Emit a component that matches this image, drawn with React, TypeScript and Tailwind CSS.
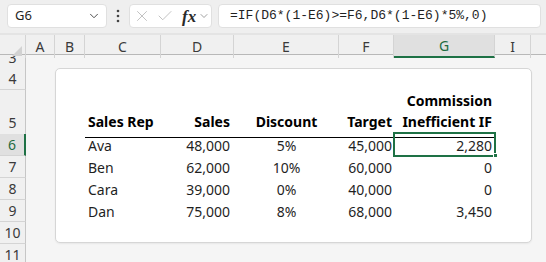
import { Check, ChevronDown, X } from "lucide-react";

const COLS = "grid grid-cols-[26px_29px_30px_76px_73px_105px_55px_101px_36px_1fr]";
const ROWHEAD = "flex items-center justify-center border-b border-r border-[#d4d4d4] border-r-[#c6c6c6] bg-[#f0f0f0] text-[14px] text-[#3a3a3a]";
const HEAD = "flex items-end pb-[5px] border-b border-black font-bold text-black";

interface Rep {
  row: number;
  name: string;
  sales: string;
  discount: string;
  target: string;
  commission: string;
}

const reps: Rep[] = [
  { row: 6, name: "Ava", sales: "48,000", discount: "5%", target: "45,000", commission: "2,280" },
  { row: 7, name: "Ben", sales: "62,000", discount: "10%", target: "60,000", commission: "0" },
  { row: 8, name: "Cara", sales: "39,000", discount: "0%", target: "40,000", commission: "0" },
  { row: 9, name: "Dan", sales: "75,000", discount: "8%", target: "68,000", commission: "3,450" },
];

const letters = ["A", "B", "C", "D", "E", "F", "G", "I"];

export default function App() {
  return (
    <div
      className="h-[262px] w-[546px] overflow-hidden bg-[#f5f5f5] text-[#1f1f1f]"
      style={{ fontFamily: '"Noto Sans", "Open Sans", sans-serif' }}
    >
      {/* Formula bar */}
      <div className="flex h-[33px] items-start bg-[#efefef] pl-[7px] pt-[4px]">
        <div className="flex h-[24px] w-[100px] items-center justify-between rounded-[4px] border border-[#e0e0e0] bg-white pl-[7px] pr-[5px]">
          <span className="text-[13px] text-[#1f1f1f]">G6</span>
          <ChevronDown size={14} strokeWidth={1.6} className="text-[#444]" />
        </div>
        <div className="flex h-[24px] w-[22px] items-center justify-center">
          <svg width="4" height="14" viewBox="0 0 4 14">
            <circle cx="2" cy="2" r="1.3" fill="#444" />
            <circle cx="2" cy="7" r="1.3" fill="#444" />
            <circle cx="2" cy="12" r="1.3" fill="#444" />
          </svg>
        </div>
        <div className="flex h-[24px] w-[83px] items-center rounded-[4px] border border-[#e0e0e0] bg-white pl-[3px]">
          <X size={18} strokeWidth={1.1} className="text-[#b5b5b5]" />
          <Check size={18} strokeWidth={1.1} className="ml-[5px] text-[#b5b5b5]" />
          <span
            className="ml-[8px] text-[17px] font-semibold italic leading-none text-[#2a2a2a]"
            style={{ fontFamily: '"Liberation Serif", serif' }}
          >
            fx
          </span>
          <ChevronDown size={12} strokeWidth={1.4} className="ml-[2px] text-[#777]" />
        </div>
        <div
          className="ml-[6px] mr-[5px] flex h-[24px] flex-1 items-center rounded-[4px] border border-[#e0e0e0] bg-white pl-[11px] text-[13px] text-[#1f1f1f]"
          style={{ fontFamily: '"Liberation Mono", monospace' }}
        >
          =IF(D6*(1-E6)&gt;=F6,D6*(1-E6)*5%,0)
        </div>
      </div>

      {/* Column headers */}
      <div className="h-[2px] bg-[#e4e4e4]" />
      <div className={`${COLS} relative z-20 h-[20px] border-b border-[#b8b8b8] bg-[#f0f0f0] text-[14px] text-[#3a3a3a]`}>
        <div className="relative border-r border-[#d4d4d4]">
          <svg className="absolute bottom-[2px] right-[3px]" width="10" height="10" viewBox="0 0 10 10">
            <polygon points="10,0 10,10 0,10" fill="#d2d2d2" />
          </svg>
        </div>
        {letters.map((l) => (
          <div
            key={l}
            className={
              l === "G"
                ? "flex items-center justify-center border-b-2 border-r border-[#d4d4d4] border-b-[#1e7145] bg-[#e0e0e0] text-[#1e6b41]"
                : "flex items-center justify-center border-r border-[#d4d4d4]"
            }
          >
            {l}
          </div>
        ))}
        <div />
      </div>

      {/* Sheet */}
      <div className="relative h-[207px] overflow-hidden">
        <div className="absolute left-[55px] top-[13px] h-[175px] w-[477px] rounded-[5px] border border-[#d6d6d6] bg-white shadow-[0_1px_2px_rgba(0,0,0,0.06)]" />

        <div className="relative z-10 -mt-[8px] text-[14px]">
          <div className={`${COLS} h-[21px]`}>
            <div className={ROWHEAD}>3</div>
          </div>
          <div className={`${COLS} h-[22px]`}>
            <div className={ROWHEAD}>4</div>
          </div>
          <div className={`${COLS} h-[44px]`}>
            <div className={`${ROWHEAD} items-end pb-[4px]`}>5</div>
            <div />
            <div />
            <div className={`${HEAD} pl-[3px]`}>Sales Rep</div>
            <div className={`${HEAD} justify-end pr-[4px]`}>Sales</div>
            <div className={`${HEAD} justify-center`}>Discount</div>
            <div className={`${HEAD} justify-end pr-[2px]`}>Target</div>
            <div className={`${HEAD} flex-col items-end pr-[3px] leading-[21px]`}>
              <span>Commission</span>
              <span>Inefficient IF</span>
            </div>
          </div>
          {reps.map((r) => (
            <div key={r.row} className={`${COLS} h-[22px]`}>
              <div
                className={
                  r.row === 6
                    ? "flex items-center justify-center border-b border-r-2 border-[#d4d4d4] border-r-[#1e7145] bg-[#e0e0e0] text-[14px] text-[#1e6b41]"
                    : ROWHEAD
                }
              >
                {r.row}
              </div>
              <div />
              <div />
              <div className="flex items-center pl-[3px]">{r.name}</div>
              <div className="flex items-center justify-end pr-[4px]">{r.sales}</div>
              <div className="flex items-center justify-center">{r.discount}</div>
              <div className="flex items-center justify-end pr-[2px]">{r.target}</div>
              <div className="relative flex items-center justify-end pr-[3px]">
                {r.row === 6 && (
                  <>
                    <div className="absolute -left-[1px] -top-[2px] h-[25px] w-[103px] border-2 border-[#1e7145]" />
                    <div className="absolute -bottom-[2px] -right-[3px] h-[5px] w-[5px] border border-white bg-[#1e7145]" />
                  </>
                )}
                <span className="relative">{r.commission}</span>
              </div>
            </div>
          ))}
          <div className={`${COLS} h-[22px]`}>
            <div className={ROWHEAD}>10</div>
          </div>
          <div className={`${COLS} h-[22px]`}>
            <div className={ROWHEAD}>11</div>
          </div>
        </div>
      </div>
    </div>
  );
}
